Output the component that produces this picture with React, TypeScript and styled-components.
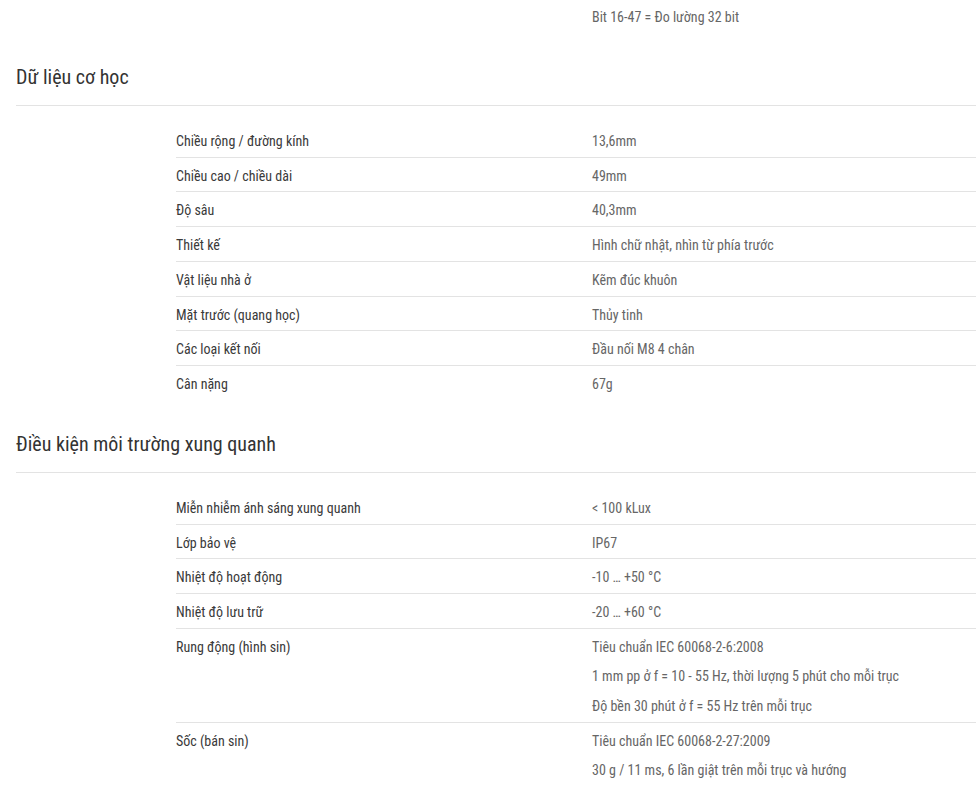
import React from "react";
import styled, { createGlobalStyle } from "styled-components";

const GlobalStyle = createGlobalStyle`
  html, body { margin: 0; padding: 0; background: #fff; }
  body {
    font-family: "Roboto Condensed", "Liberation Sans Narrow", Roboto, "Liberation Sans", sans-serif;
    -webkit-font-smoothing: antialiased;
  }
`;

const Page = styled.div`
  padding: 0 0 0 16px;
`;

const Section = styled.section`
  display: flex;
  flex-direction: column;
`;

const Heading = styled.h2`
  margin: 29px 0 0;
  padding: 0 0 14px;
  font-size: 20px;
  line-height: 28px;
  font-weight: 400;
  color: #333;
  border-bottom: 1px solid #e3e3e3;
`;

const Rows = styled.div`
  margin: 17px 0 0 160px;
  display: flex;
  flex-direction: column;
`;

const Row = styled.div<{ $last?: boolean }>`
  display: grid;
  grid-template-columns: 416px 1fr;
  padding: 8px 0 5.75px;
  border-bottom: 1px solid ${(p) => (p.$last ? "transparent" : "#e3e3e3")};
`;

const Label = styled.div`
  font-size: 14px;
  line-height: 20px;
  color: #3a3a3a;
`;

const Values = styled.div`
  display: flex;
  flex-direction: column;
  gap: 9.5px;
`;

const Value = styled.div`
  font-size: 14px;
  line-height: 20px;
  color: #666;
`;

const TopRows = styled(Rows)`
  margin-top: -1px;
`;

type Item = { label: string; values: string[] };

const mech: Item[] = [
  { label: "Chiều rộng / đường kính", values: ["13,6mm"] },
  { label: "Chiều cao / chiều dài", values: ["49mm"] },
  { label: "Độ sâu", values: ["40,3mm"] },
  { label: "Thiết kế", values: ["Hình chữ nhật, nhìn từ phía trước"] },
  { label: "Vật liệu nhà ở", values: ["Kẽm đúc khuôn"] },
  { label: "Mặt trước (quang học)", values: ["Thủy tinh"] },
  { label: "Các loại kết nối", values: ["Đầu nối M8 4 chân"] },
  { label: "Cân nặng", values: ["67g"] },
];

const env: Item[] = [
  { label: "Miễn nhiễm ánh sáng xung quanh", values: ["< 100 kLux"] },
  { label: "Lớp bảo vệ", values: ["IP67"] },
  { label: "Nhiệt độ hoạt động", values: ["-10 … +50 °C"] },
  { label: "Nhiệt độ lưu trữ", values: ["-20 … +60 °C"] },
  {
    label: "Rung động (hình sin)",
    values: [
      "Tiêu chuẩn IEC 60068-2-6:2008",
      "1 mm pp ở f = 10 - 55 Hz, thời lượng 5 phút cho mỗi trục",
      "Độ bền 30 phút ở f = 55 Hz trên mỗi trục",
    ],
  },
  {
    label: "Sốc (bán sin)",
    values: [
      "Tiêu chuẩn IEC 60068-2-27:2009",
      "30 g / 11 ms, 6 lần giật trên mỗi trục và hướng",
    ],
  },
];

function ItemRows({ items }: { items: Item[] }) {
  return (
    <>
      {items.map((it, i) => (
        <Row key={it.label} $last={i === items.length - 1}>
          <Label>{it.label}</Label>
          <Values>
            {it.values.map((v) => (
              <Value key={v}>{v}</Value>
            ))}
          </Values>
        </Row>
      ))}
    </>
  );
}

export default function App() {
  return (
    <Page>
      <GlobalStyle />
      <TopRows>
        <Row $last>
          <Label />
          <Values>
            <Value>Bit 16-47 = Đo lường 32 bit</Value>
          </Values>
        </Row>
      </TopRows>
      <Section>
        <Heading>Dữ liệu cơ học</Heading>
        <Rows>
          <ItemRows items={mech} />
        </Rows>
      </Section>
      <Section>
        <Heading>Điều kiện môi trường xung quanh</Heading>
        <Rows>
          <ItemRows items={env} />
        </Rows>
      </Section>
    </Page>
  );
}
